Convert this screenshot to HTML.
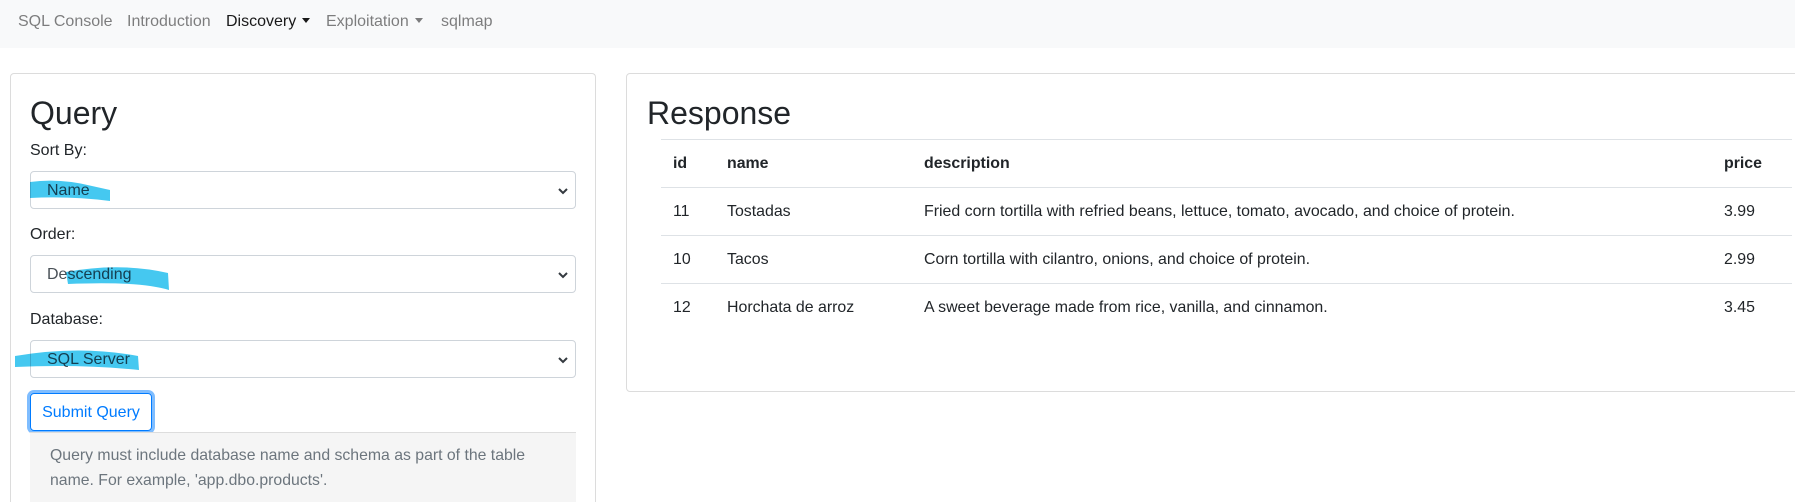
<!DOCTYPE html>
<html style="height:502px;overflow:hidden"><head><meta charset="utf-8"><style>
*{box-sizing:border-box;margin:0;padding:0}
body{width:1795px;height:502px;overflow:hidden;background:#fff;font-family:"Liberation Sans",Arial,sans-serif;font-size:16px;color:#212529;position:relative}
.nav{position:absolute;left:0;top:0;width:1795px;height:48px;background:#f8f9fa}
.nav span{position:absolute;top:12px;color:rgba(0,0,0,.5);line-height:20px}
.nav span.act{color:rgba(0,0,0,.9)}
.caret{display:inline-block;width:0;height:0;border-left:4.5px solid transparent;border-right:4.5px solid transparent;border-top:5px solid currentColor;vertical-align:3px;margin-left:6px}
.card{position:absolute;border:1px solid #dcdcdc;border-radius:4px;background:#fff}
.abs{position:absolute;line-height:1}
h2{position:absolute;font-size:32px;font-weight:500;line-height:1}
.sel{position:absolute;left:30px;width:546px;height:38px;border:1px solid #ced4da;border-radius:4px;color:#495057;padding-left:16px;line-height:37px}
.sel svg{position:absolute;right:6px;top:14px}
.btn{position:absolute;left:30px;top:393px;width:122px;height:38px;border:1px solid #007bff;border-radius:4px;color:#007bff;line-height:37px;text-align:center;box-shadow:0 0 0 3px rgba(0,123,255,.5)}
.note{position:absolute;left:30px;top:432px;width:546px;height:70px;background:#f5f5f5;border-top:1px solid #ddd;color:#6c757d;padding:10px 20px;line-height:25px;font-size:15.8px}
table{position:absolute;left:661px;top:139px;width:1131px;border-collapse:collapse;font-size:15.9px}
td,th{border-top:1px solid #dee2e6;height:48px;padding:1px 12px 0;text-align:left;vertical-align:middle}
th{font-weight:bold;border-bottom:1px solid #dee2e6}
</style></head><body>
<div class="nav">
<span style="left:18px">SQL Console</span>
<span style="left:127px">Introduction</span>
<span class="act" style="left:226px">Discovery<i class="caret"></i></span>
<span style="left:326px">Exploitation<i class="caret"></i></span>
<span style="left:441px">sqlmap</span>
</div>
<div class="card" style="left:10px;top:73px;width:586px;height:429px;border-bottom:none;border-radius:4px 4px 0 0"></div>
<h2 style="left:30px;top:97px">Query</h2>
<div class="abs" style="left:30px;top:143px">Sort By:</div>
<div class="sel" style="top:171px">Name<svg width="12" height="10" viewBox="0 0 12 10"><path d="M2 3l4 4 4-4" fill="none" stroke="#343a40" stroke-width="2"/></svg></div>
<div class="abs" style="left:30px;top:227px">Order:</div>
<div class="sel" style="top:255px">Descending<svg width="12" height="10" viewBox="0 0 12 10"><path d="M2 3l4 4 4-4" fill="none" stroke="#343a40" stroke-width="2"/></svg></div>
<div class="abs" style="left:30px;top:312px">Database:</div>
<div class="sel" style="top:340px">SQL Server<svg width="12" height="10" viewBox="0 0 12 10"><path d="M2 3l4 4 4-4" fill="none" stroke="#343a40" stroke-width="2"/></svg></div>
<svg style="position:absolute;left:0;top:0;mix-blend-mode:multiply" width="600" height="400">
<path d="M30 182 Q60 178 92 186 L110 190 L110 201 Q70 196 30 198 Z" fill="#45c8f0"/>
<path d="M66 272 Q120 262 168 273 L169 290 Q140 281 68 284 Z" fill="#45c8f0"/>
<path d="M15 356 Q80 345 138 356 L139 370 Q80 364 15 367 Z" fill="#45c8f0"/>
</svg>
<div class="btn">Submit Query</div>
<div class="note">Query must include database name and schema as part of the table name. For example, 'app.dbo.products'.</div>
<div class="card" style="left:626px;top:73px;width:1180px;height:319px"></div>
<h2 style="left:647px;top:97px">Response</h2>
<table>
<tr><th style="width:54px">id</th><th style="width:197px">name</th><th style="width:800px">description</th><th>price</th></tr>
<tr><td>11</td><td>Tostadas</td><td>Fried corn tortilla with refried beans, lettuce, tomato, avocado, and choice of protein.</td><td>3.99</td></tr>
<tr><td>10</td><td>Tacos</td><td>Corn tortilla with cilantro, onions, and choice of protein.</td><td>2.99</td></tr>
<tr><td>12</td><td>Horchata de arroz</td><td>A sweet beverage made from rice, vanilla, and cinnamon.</td><td>3.45</td></tr>
</table>
</body></html>
